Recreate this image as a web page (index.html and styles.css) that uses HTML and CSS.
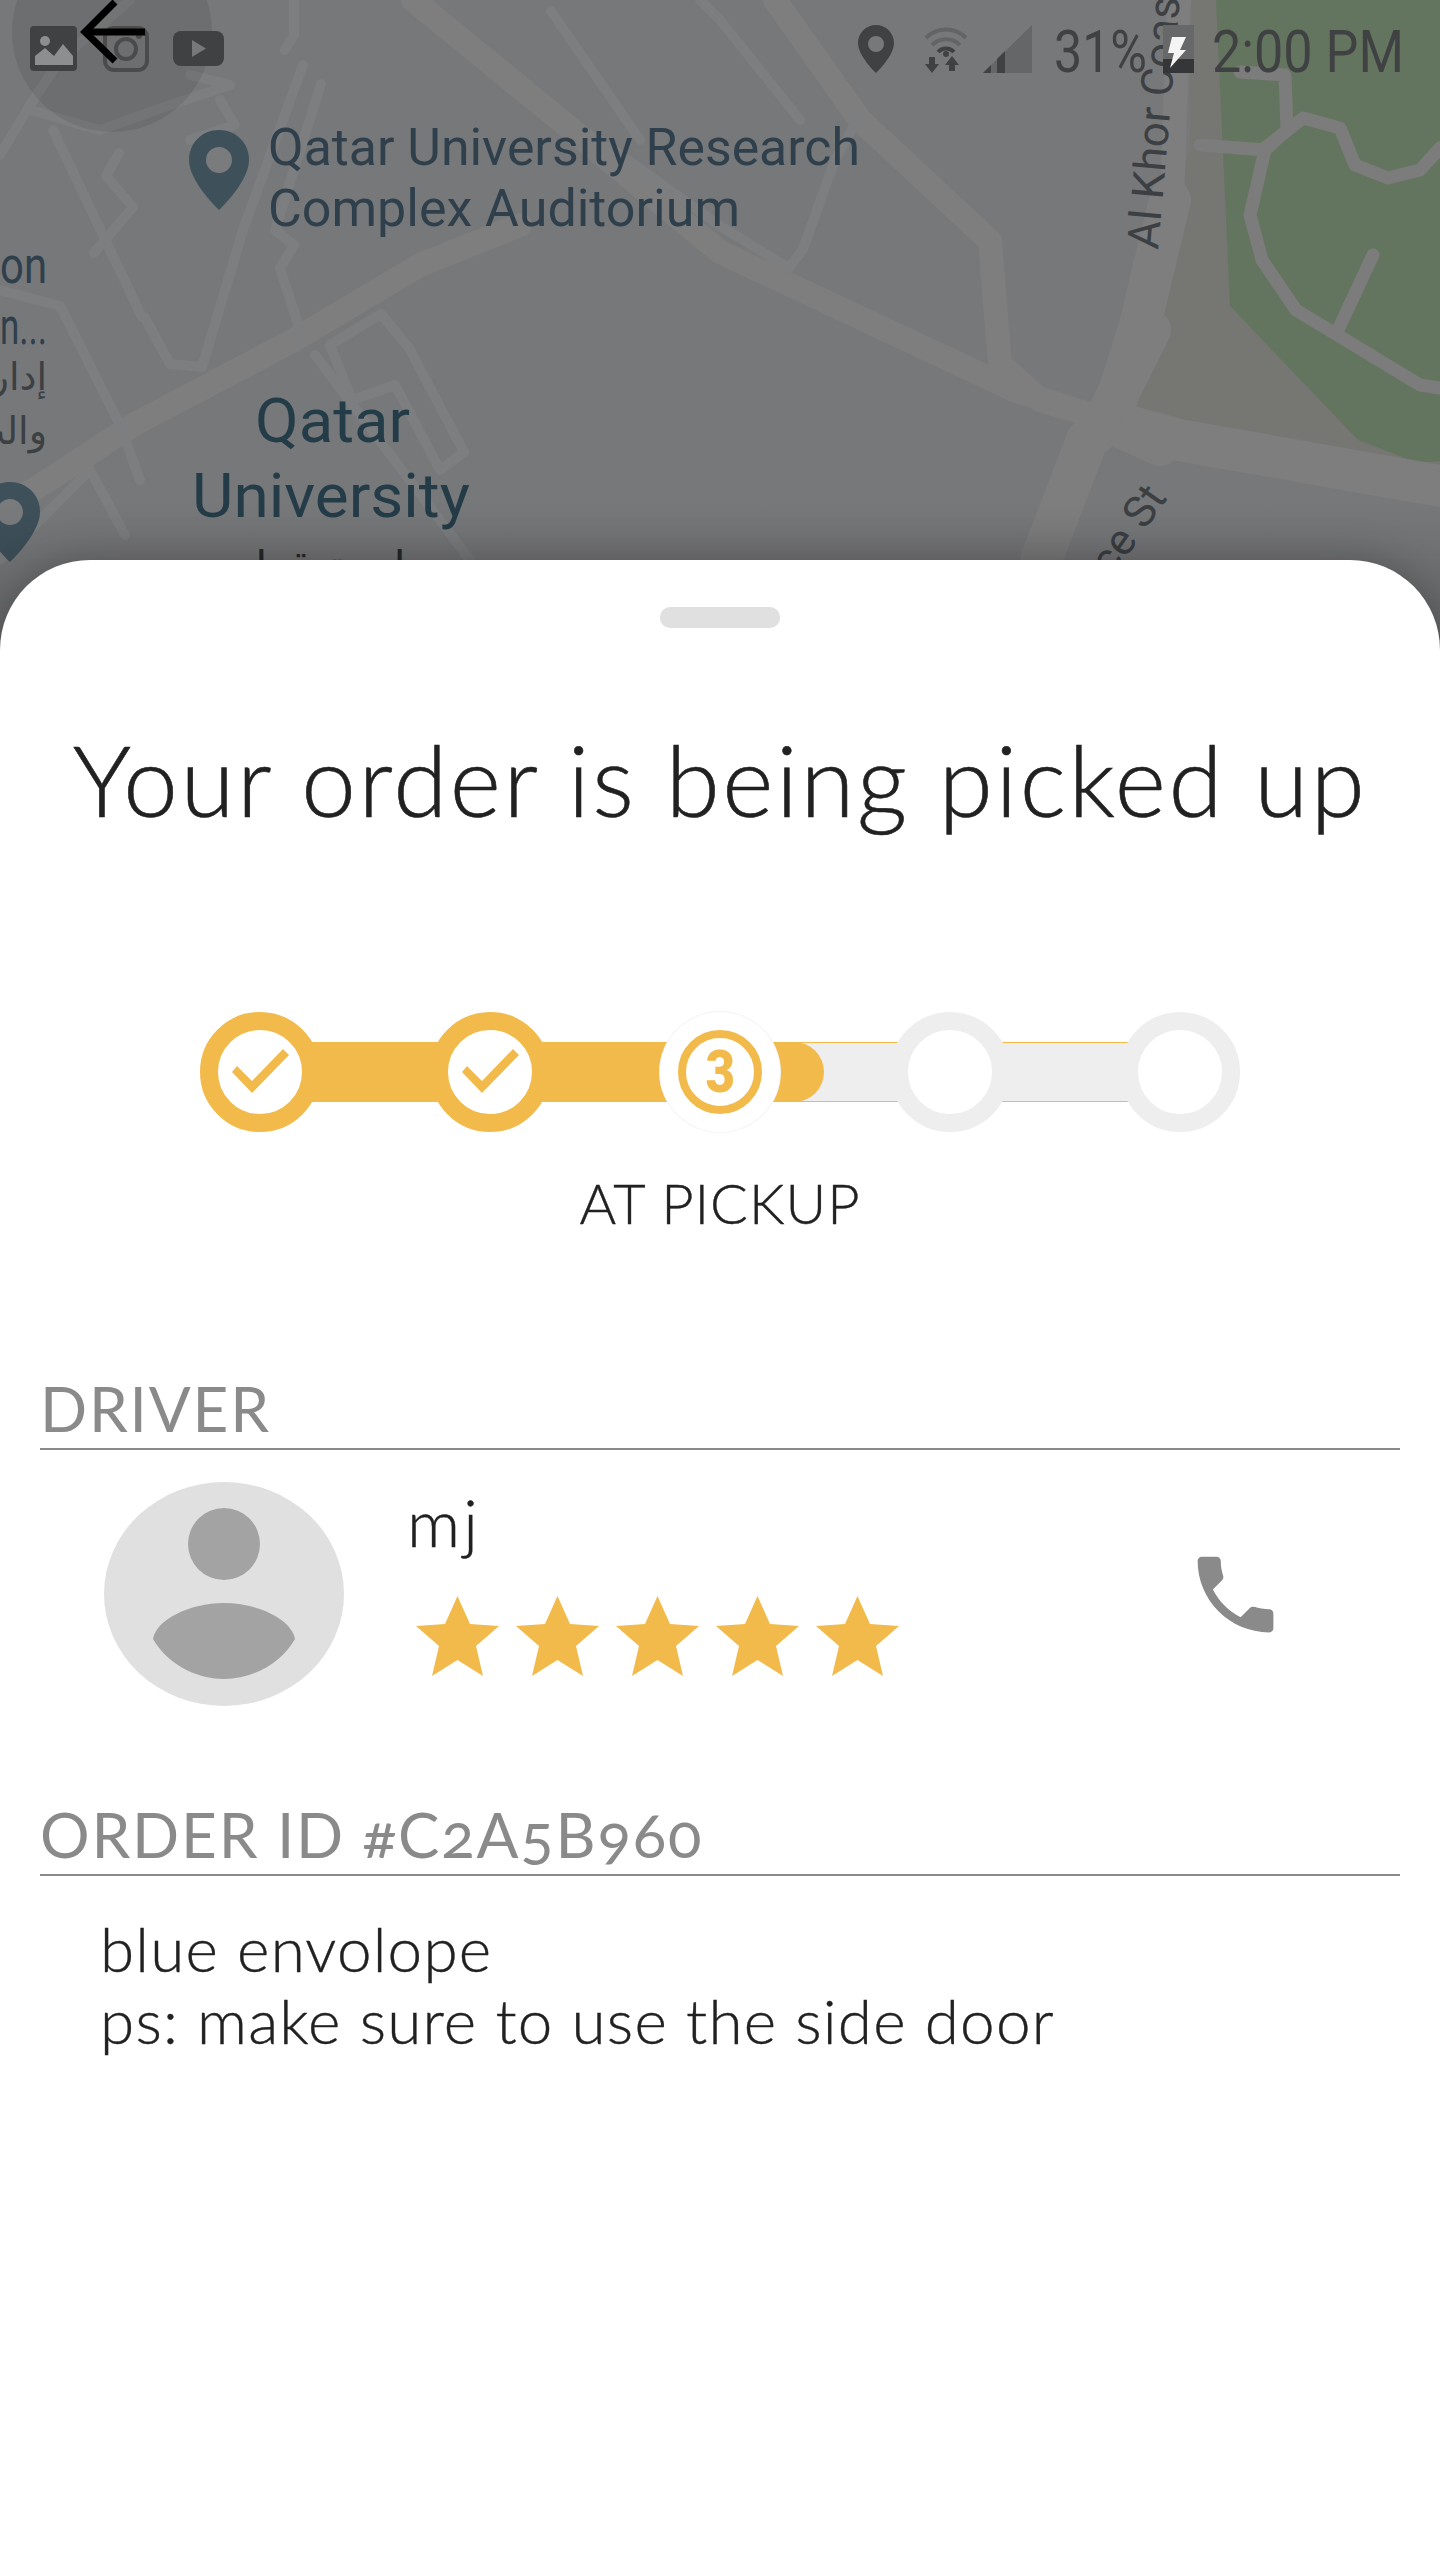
FILE: index.html
```html
<html>
<head>
  <title>Order tracking</title>
  <link rel="stylesheet" href="styles.css">
</head>
<body>
  <div class="screen">

    <!-- map behind the sheet, with the status bar drawn on top of it -->
    <svg class="map" viewBox="0 0 1440 680" width="1440" height="680">
      <defs>
        <linearGradient id="fade" x1="0" y1="0" x2="0" y2="1">
          <stop offset="0" stop-color="#000" stop-opacity="0"/>
          <stop offset="1" stop-color="#000" stop-opacity="0.22"/>
        </linearGradient>
      </defs>
      <rect width="1440" height="680" fill="#77787a"/>
      <polygon points="1190,150 1133,325 1110,421 1179,440 1440,486 1440,461 1418,463 1358,440 1230,306 1216,0 1190,0" fill="#767673"/>
      <polygon points="1216,0 1230,306 1358,440 1418,463 1440,461 1440,0" fill="#64755f"/>

      <g class="road-big">
        <polyline points="1170,200 1140,325 1110,421"/>
        <polyline points="1110,421 1179,440 1440,486"/>
        <polyline points="1110,421 1087,440 1041,560"/>
        <polyline points="1150,330 1105,420 1160,445"/>
      </g>
      <g class="road-wide">
        <polyline points="0,525 27,494 133,425 294,340 420,265 520,225"/>
        <polyline points="1179,0 1172,200"/>
        <polyline points="413,0 560,120 720,252 835,306 1014,390 1110,421"/>
        <polyline points="775,0 860,120 990,241 1000,364 1040,400 1110,421"/>
      </g>
      <g class="road">
        <polyline points="294,0 294,35 285,50"/>
        <polyline points="303,65 243,230 202,367 170,364 145,318"/>
        <polyline points="321,84 275,230 294,245 280,268 303,340"/>
        <polyline points="330,345 381,314 409,348 464,452 440,470 395,385 352,400 330,345"/>
        <polyline points="315,355 470,560"/>
        <polyline points="0,290 60,306 120,425 140,480"/>
        <polyline points="53,130 142,317"/>
        <polyline points="119,153 106,176 133,207 94,253"/>
        <polyline points="0,155 30,105 60,60 130,0"/>
        <polyline points="30,110 100,130 170,105 230,85 190,75"/>
        <polyline points="220,100 235,125 190,140"/>
        <polyline points="551,11 640,140"/>
        <polyline points="858,119 835,160 803,249 789,268 720,226 600,140"/>
        <polyline points="700,0 720,20 800,120"/>
        <polyline points="0,560 90,470 125,535"/>
      </g>
      <g class="road-park">
        <polyline points="1240,72 1285,75 1287,130 1265,150 1200,145"/>
        <polyline points="1265,150 1250,215 1262,260 1296,310 1420,385 1440,388"/>
        <polyline points="1265,148 1303,118 1340,128 1355,165 1388,178 1420,170 1440,148"/>
        <polyline points="1373,255 1338,330"/>
      </g>

      <!-- map labels -->
      <path class="pin" d="M219 130c-17 0-30 13-30 30 0 22 30 50 30 50s30-28 30-50c0-17-13-30-30-30z"/>
      <circle class="pin-hole" cx="219" cy="160" r="13"/>
      <path class="pin" d="M10 482c-17 0-30 13-30 30 0 22 30 50 30 50s30-28 30-50c0-17-13-30-30-30z"/>
      <circle class="pin-hole" cx="10" cy="512" r="13"/>

      <text class="map-label" x="268" y="165" textLength="592" lengthAdjust="spacingAndGlyphs">Qatar University Research</text>
      <text class="map-label" x="268" y="226" textLength="472" lengthAdjust="spacingAndGlyphs">Complex Auditorium</text>
      <text class="map-label" x="0" y="283" textLength="47" lengthAdjust="spacingAndGlyphs">on</text>
      <text class="map-label" x="0" y="344" textLength="47" lengthAdjust="spacingAndGlyphs">n...</text>
      <text class="map-arabic" x="47" y="390" text-anchor="end">إدار</text>
      <text class="map-arabic" x="47" y="444" text-anchor="end">والت</text>
      <text class="map-title" x="255" y="442" textLength="155" lengthAdjust="spacingAndGlyphs">Qatar</text>
      <text class="map-title" x="192" y="517" textLength="278" lengthAdjust="spacingAndGlyphs">University</text>
      <text class="map-arabic-dark" x="332" y="582" text-anchor="middle">جامعة قطر</text>
      <text class="map-street" transform="translate(1158 250) rotate(-85)">Al Khor Coast</text>
      <text class="map-street" transform="translate(1112 578) rotate(-55)">ce St</text>

      <rect y="500" width="1440" height="180" fill="url(#fade)"/>

      <!-- back button -->
      <circle cx="112" cy="32" r="100" fill="#000" fill-opacity="0.08"/>

      <!-- status bar, left -->
      <rect x="30" y="26" width="47" height="45" rx="4" fill="#404143"/>
      <circle cx="45" cy="41" r="5" fill="#8d8e90"/>
      <polygon points="35,65 35,56 45,48 54,56 63,44 73,56 73,65" fill="#8d8e90"/>
      <rect x="105" y="28" width="42" height="42" rx="9" fill="none" stroke="#4a4b4d" stroke-width="4"/>
      <circle cx="126" cy="49" r="10" fill="none" stroke="#4a4b4d" stroke-width="4"/>
      <circle cx="139" cy="36" r="3" fill="#4a4b4d"/>
      <rect x="173" y="31" width="51" height="35" rx="8" fill="#404143"/>
      <polygon points="192,40 192,57 206,48.500" fill="#77787a"/>

      <!-- status bar, right -->
      <path fill="#404143" fill-rule="evenodd" d="M876 25c-10 0-18 8-18 18 0 13 18 30 18 30s18-17 18-30c0-10-8-18-18-18zm0 11a8 8 0 1 1 0 16 8 8 0 0 1 0-16z"/>
      <g fill="none" stroke="#636466" stroke-width="4">
        <path d="M926 38a28 28 0 0 1 40 0"/>
        <path d="M932 45a20 20 0 0 1 28 0"/>
      </g>
      <path d="M938 52a11 11 0 0 1 16 0" fill="none" stroke="#404143" stroke-width="4"/>
      <g fill="#404143">
        <circle cx="946" cy="54" r="3"/>
        <polygon points="932,73 925,64 929,64 929,57 935,57 935,64 939,64"/>
        <polygon points="952,56 959,65 955,65 955,71 949,71 949,65 945,65"/>
      </g>
      <polygon points="983,73 1032,25 1032,73" fill="#656668"/>
      <polygon points="983,73 991,65 991,73" fill="#404143"/>
      <polygon points="997,59 1005,51 1005,73 997,73" fill="#404143"/>
      <text class="status-text" x="1054" y="72" textLength="93" lengthAdjust="spacingAndGlyphs">31%</text>
      <rect x="1163" y="25" width="31" height="34" fill="#67686a"/>
      <rect x="1163" y="59" width="31" height="14" fill="#353638"/>
      <polygon points="1172,37 1186,37 1180,50 1186,50 1170,68 1174,53 1168,53" fill="#f4f4f4"/>
      <text class="status-text" x="1212" y="72" textLength="192" lengthAdjust="spacingAndGlyphs">2:00 PM</text>

      <g fill="none" stroke="#000" stroke-width="7">
        <polyline points="115,2 85,32 115,61"/>
        <line x1="85" y1="32" x2="145" y2="32"/>
      </g>
    </svg>

    <div class="sheet">
      <div class="handle"></div>
      <h1 class="title">Your order is being picked up</h1>

      <div class="stepper">
        <div class="step step-done">
          <svg class="check" viewBox="0 0 84 84" width="84" height="84"><polygon points="14,42 34,63 71,25 65,19 34,51 19,36"/></svg>
        </div>
        <div class="bar bar-done"></div>
        <div class="step step-done">
          <svg class="check" viewBox="0 0 84 84" width="84" height="84"><polygon points="14,42 34,63 71,25 65,19 34,51 19,36"/></svg>
        </div>
        <div class="bar bar-done"></div>
        <div class="step step-current"><div class="step-ring"><span class="step-num">3</span></div></div>
        <div class="bar bar-todo"><div class="bar-fill"></div></div>
        <div class="step step-todo"></div>
        <div class="bar bar-todo"></div>
        <div class="step step-todo"></div>
      </div>
      <div class="step-label">AT PICKUP</div>

      <div class="section-head driver-head">DRIVER</div>
      <div class="driver">
        <svg class="avatar" viewBox="0 0 240 224" width="240" height="224">
          <ellipse cx="120" cy="112" rx="120" ry="112" fill="#e0e0e0"/>
          <circle cx="120" cy="62" r="36" fill="#a3a3a3"/>
          <path d="M49 157C52 138 85 121 120 121C155 121 188 138 191 157C178 180 150 197 120 197C90 197 62 180 49 157Z" fill="#a3a3a3"/>
        </svg>
        <div class="driver-info">
          <div class="driver-name">mj</div>
          <div class="stars">
            <svg class="star" viewBox="0 0 83 80" width="83" height="80"><polygon points="41.500,0 54,28 83,30 60,50 67,80 41.500,64 16,80 23,50 0,30 29,28"/></svg>
            <svg class="star" viewBox="0 0 83 80" width="83" height="80"><polygon points="41.500,0 54,28 83,30 60,50 67,80 41.500,64 16,80 23,50 0,30 29,28"/></svg>
            <svg class="star" viewBox="0 0 83 80" width="83" height="80"><polygon points="41.500,0 54,28 83,30 60,50 67,80 41.500,64 16,80 23,50 0,30 29,28"/></svg>
            <svg class="star" viewBox="0 0 83 80" width="83" height="80"><polygon points="41.500,0 54,28 83,30 60,50 67,80 41.500,64 16,80 23,50 0,30 29,28"/></svg>
            <svg class="star" viewBox="0 0 83 80" width="83" height="80"><polygon points="41.500,0 54,28 83,30 60,50 67,80 41.500,64 16,80 23,50 0,30 29,28"/></svg>
          </div>
        </div>
        <svg class="phone" viewBox="0 0 24 24" width="101" height="101">
          <path d="M6.62 10.79c1.44 2.83 3.76 5.14 6.59 6.59l2.2-2.2c.27-.27.67-.36 1.02-.24 1.12.37 2.33.57 3.57.57.55 0 1 .45 1 1V20c0 .55-.45 1-1 1-9.39 0-17-7.61-17-17 0-.55.45-1 1-1h3.5c.55 0 1 .45 1 1 0 1.25.2 2.45.57 3.57.11.35.03.74-.25 1.02l-2.2 2.2z"/>
        </svg>
      </div>

      <div class="section-head order-head">ORDER ID #C2A5B960</div>
      <div class="note">
        blue envolope<br>
        ps: make sure to use the side door
      </div>
    </div>
  </div>
</body>
</html>
```

FILE: styles.css
```css
body {
  margin: 0;
  background-color: #ffffff;
  font-family: Lato, "Open Sans", sans-serif;
}

.screen {
  position: relative;
  width: 1440px;
  height: 2560px;
  overflow: hidden;
}

/* map */

.map {
  position: absolute;
  top: 0;
  left: 0;
}

.road-big polyline,
.road-wide polyline,
.road polyline,
.road-park polyline {
  fill: none;
  stroke-linejoin: round;
  stroke-linecap: round;
}

.road-big polyline {
  stroke: #7e7e7f;
  stroke-width: 42px;
}

.road-wide polyline {
  stroke: #7e7e7f;
  stroke-width: 24px;
}

.road polyline {
  stroke: #7d7e7f;
  stroke-width: 10px;
}

.road-park polyline {
  stroke: #7b7c7b;
  stroke-width: 13px;
}

.pin {
  fill: #3e505a;
}

.pin-hole {
  fill: #7a7b7d;
}

.map-label,
.map-title,
.map-street,
.status-text {
  font-family: Roboto, sans-serif;
}

.map-label {
  font-size: 52px;
  fill: #2f3f4b;
}

.map-title {
  font-size: 62px;
  fill: #243c48;
}

.map-street {
  font-size: 44px;
  fill: #3c4043;
}

.map-arabic,
.map-arabic-dark {
  font-family: "DejaVu Sans", sans-serif;
}

.map-arabic {
  font-size: 38px;
  fill: #3c4043;
}

.map-arabic-dark {
  font-size: 44px;
  fill: #26282a;
}

.status-text {
  font-size: 60px;
  fill: #404143;
}

/* sheet */

.sheet {
  position: relative;
  box-sizing: border-box;
  height: 2000px;
  margin-top: 560px;
  padding: 47px 40px 0;
  background-color: #ffffff;
  border-radius: 90px 90px 0 0;
  box-shadow: 0 0 40px rgba(0, 0, 0, 0.25);
}

.handle {
  width: 120px;
  height: 21px;
  margin: 0 auto;
  background-color: #e0e0e0;
  border-radius: 10px;
}

.title {
  margin: 96px 0 0;
  font-size: 98px;
  font-weight: 300;
  line-height: 110px;
  text-align: center;
  letter-spacing: 2.6px;
  -webkit-text-stroke: 0.6px #212121;
  color: #212121;
}

/* stepper */

.stepper {
  display: flex;
  align-items: center;
  justify-content: center;
  margin-top: 178px;
}

.step {
  position: relative;
  z-index: 1;
  flex: none;
  display: flex;
  align-items: center;
  justify-content: center;
  box-sizing: border-box;
  width: 120px;
  height: 120px;
  background-color: #ffffff;
  border-radius: 50%;
}

.step-done {
  border: 18px solid #f2ba4a;
}

.step-todo {
  border: 18px solid #eeeeee;
}

.step-current {
  box-shadow: 0 0 0 1px #f3f3f3;
}

.step-ring {
  box-sizing: border-box;
  width: 84px;
  height: 84px;
  border: 8px solid #f2ba4a;
  border-radius: 50%;
  font-family: Roboto, sans-serif;
  font-size: 60px;
  font-weight: 900;
  line-height: 68px;
  text-align: center;
  color: #f2ba4a;
}

.step-num {
  display: inline-block;
  transform: scaleX(0.85);
}

.check {
  flex: none;
  fill: #f2ba4a;
}

.bar {
  flex: none;
  box-sizing: border-box;
  width: 130px;
  height: 60px;
  margin: 0 -10px;
}

.bar-done {
  background-color: #f2ba4a;
}

.bar-todo {
  background-color: #eeeeee;
  border-top: 1px solid #f2ba4a;
  border-bottom: 1px solid #f2ba4a;
}

.bar-fill {
  width: 54px;
  height: 60px;
  margin-top: -1px;
  background-color: #f2ba4a;
  border-radius: 0 30px 30px 0;
}

.step-label {
  margin-top: 36px;
  font-size: 56px;
  font-weight: 300;
  line-height: 70px;
  text-align: center;
  letter-spacing: 1px;
  -webkit-text-stroke: 0.4px #212121;
  color: #212121;
}

/* sections */

.section-head {
  padding-bottom: 5px;
  border-bottom: 2px solid #8a8a8a;
  font-size: 62px;
  line-height: 70px;
  letter-spacing: 1.8px;
  color: #8a8a8a;
}

.driver-head {
  margin-top: 135px;
}

.order-head {
  margin-top: 93px;
  font-variant-numeric: oldstyle-nums;
}

.driver {
  display: flex;
  align-items: flex-start;
  margin-top: 32px;
  padding-left: 64px;
}

.avatar {
  flex: none;
}

.driver-info {
  margin-left: 63px;
  padding-top: 5px;
}

.driver-name {
  font-size: 66px;
  font-weight: 300;
  line-height: 70px;
  letter-spacing: 3px;
  -webkit-text-stroke: 0.4px #212121;
  color: #212121;
}

.stars {
  display: flex;
  gap: 17px;
  margin-top: 39px;
  margin-left: 9px;
}

.star {
  fill: #f2ba4a;
}

.phone {
  flex: none;
  align-self: center;
  margin-left: auto;
  margin-right: 114px;
  fill: #8a8a8a;
}

.note {
  margin-top: 36px;
  padding-left: 60px;
  font-size: 62px;
  font-weight: 300;
  line-height: 72px;
  letter-spacing: 1.2px;
  -webkit-text-stroke: 0.4px #212121;
  color: #212121;
}
```
